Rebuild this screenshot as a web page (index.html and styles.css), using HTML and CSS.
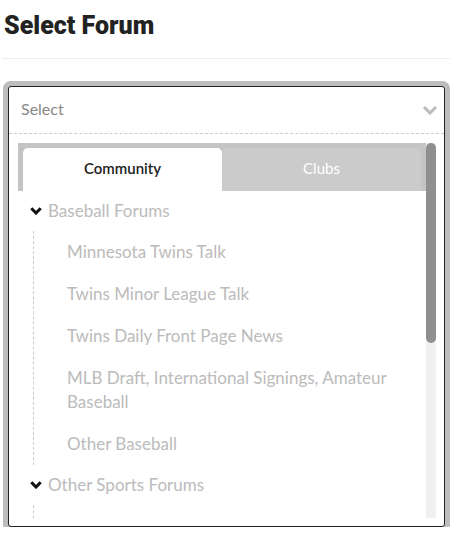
FILE: index.html
```html
<!DOCTYPE html>
<html lang="en">
<head>
    <meta charset="UTF-8">
    <meta name="viewport" content="width=device-width, initial-scale=1.0">
    <title>Select Forum</title>
    <link rel="stylesheet" href="styles.css">
</head>
<body>
    <div class="page">
        <h2 class="page-title">Select Forum</h2>

        <div class="forum-select">
            <div class="select-head">
                <span class="placeholder">Select</span>
                <svg class="select-caret" width="16" height="10" viewBox="0 0 16 10">
                    <path d="M2 2 L8 8 L14 2" fill="none" stroke="#bbb" stroke-width="3"/>
                </svg>
            </div>

            <div class="select-body">
                <div class="dropdown">
                    <div class="dropdown-content">
                        <div class="tabs">
                            <div class="tab active">Community</div>
                            <div class="tab">Clubs</div>
                        </div>

                        <ul class="tree">
                            <li class="group">
                                <div class="group-name">
                                    <svg class="chevron" width="12" height="8" viewBox="0 0 12 8">
                                        <path d="M1.3 1.3 L6 6 L10.7 1.3" fill="none" stroke="#111" stroke-width="3"/>
                                    </svg>
                                    Baseball Forums
                                </div>
                                <ul class="children">
                                    <li>Minnesota Twins Talk</li>
                                    <li>Twins Minor League Talk</li>
                                    <li>Twins Daily Front Page News</li>
                                    <li>MLB Draft, International Signings, Amateur Baseball</li>
                                    <li>Other Baseball</li>
                                </ul>
                            </li>
                            <li class="group">
                                <div class="group-name">
                                    <svg class="chevron" width="12" height="8" viewBox="0 0 12 8">
                                        <path d="M1.3 1.3 L6 6 L10.7 1.3" fill="none" stroke="#111" stroke-width="3"/>
                                    </svg>
                                    Other Sports Forums
                                </div>
                                <ul class="children loading"></ul>
                            </li>
                        </ul>
                    </div>

                    <div class="scrollbar">
                        <div class="scroll-thumb" style="height: 200px;"></div>
                    </div>
                </div>
            </div>
        </div>
    </div>
</body>
</html>
```

FILE: styles.css
```css
body {
    margin: 0;
    background-color: #fff;
    font-family: Lato, "Open Sans", sans-serif;
    color: #222;
}

.page {
    padding: 0 0 0 2px;
}

.page-title {
    font-family: Roboto, sans-serif;
    font-size: 25px;
    font-weight: 900;
    color: #222;
    margin: 0;
    padding: 11px 0 0 2px;
    height: 47px;
    line-height: 30px;
    border-bottom: 1px solid #eee;
}

/* select box with its focus ring */
.forum-select {
    margin: 27px 5px 0 6px;
    border: 1px solid #222;
    border-radius: 3px;
    box-shadow: 0 0 0 5px #bdbdbd;
    background-color: #fff;
}

.select-head {
    display: flex;
    align-items: center;
    justify-content: space-between;
    height: 47px;
    padding: 0 6px 3px 12px;
    box-sizing: border-box;
    border-bottom: 1px dashed #ccc;
}

.placeholder {
    font-size: 16px;
    color: #888;
}

.select-caret {
    margin-top: 3px;
}

.select-body {
    padding: 9px 8px 8px 9px;
}

.dropdown {
    display: flex;
    height: 375px;
}

.dropdown-content {
    flex: 1;
    overflow: hidden;
}

.scrollbar {
    width: 10px;
    background-color: #f0f0f0;
}

.scroll-thumb {
    background-color: #8f8f8f;
    border-radius: 5px;
}

.tabs {
    display: flex;
    padding: 5px 5px 0 5px;
    background-color: #c4c4c4;
}

.tab {
    flex: 1;
    height: 43px;
    line-height: 41px;
    text-align: center;
    font-size: 15px;
    color: #fff;
    background-color: #cbcbcb;
    border-radius: 5px 5px 0 0;
}

.tab.active {
    background-color: #fff;
    color: #222;
    font-weight: 600;
}

.tree,
.children {
    list-style: none;
    margin: 0;
    padding: 0;
}

.tree {
    padding-left: 12px;
}

.group-name {
    display: flex;
    align-items: center;
    gap: 6px;
    padding: 8px 0;
    line-height: 24px;
    font-size: 17px;
    color: #bbb;
}

.children {
    margin-left: 3px;
    padding-left: 33px;
    border-left: 1px dashed #ccc;
}

.children.loading {
    height: 40px;
}

.children li {
    padding: 9px 0;
    line-height: 24px;
    font-size: 17px;
    color: #bbb;
}
```
